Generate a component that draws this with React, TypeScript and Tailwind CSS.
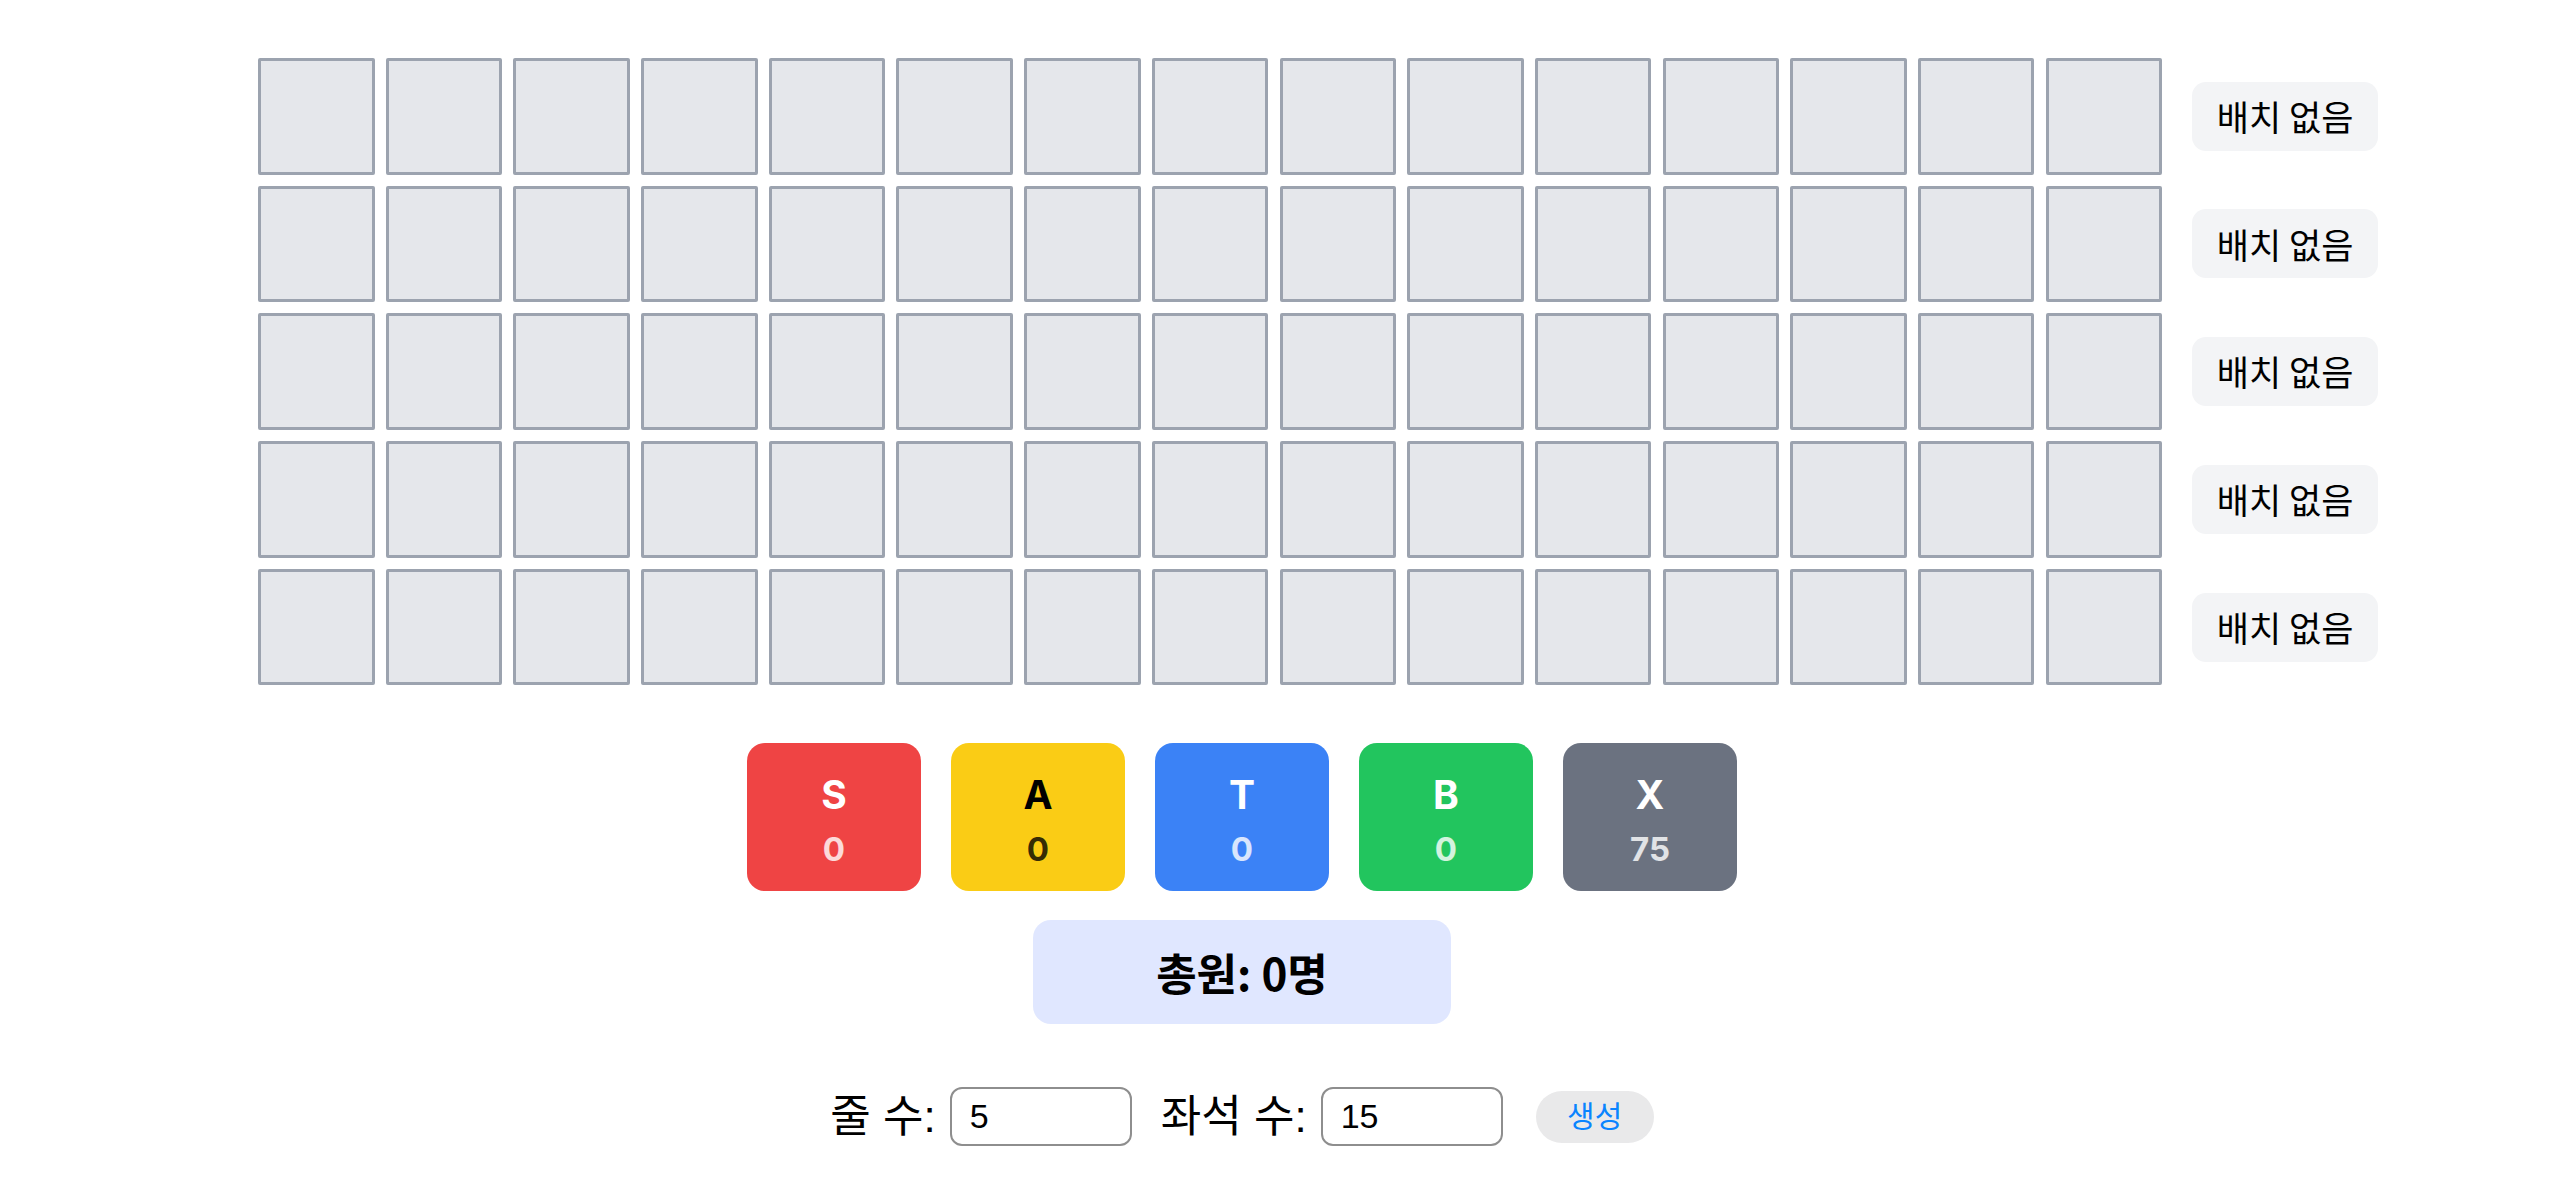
import React from 'react';

type Grade = 'S' | 'A' | 'T' | 'B' | 'X';

interface GradeCard {
    grade: Grade;
    count: number;
    box: string;
    label: string;
    value: string;
}

const ROWS = 5;
const SEATS = 15;

const gradeCards: GradeCard[] = [
    { grade: 'S', count: 0, box: 'bg-[#ef4444]', label: 'text-white', value: 'text-white/80' },
    { grade: 'A', count: 0, box: 'bg-[#facc15]', label: 'text-black', value: 'text-black/80' },
    { grade: 'T', count: 0, box: 'bg-[#3b82f6]', label: 'text-white', value: 'text-white/80' },
    { grade: 'B', count: 0, box: 'bg-[#22c55e]', label: 'text-white', value: 'text-white/80' },
    { grade: 'X', count: 75, box: 'bg-[#6b7280]', label: 'text-white', value: 'text-white/80' },
];

const kr = "font-['Noto_Sans_CJK_KR',sans-serif]";
const ui = "font-['Liberation_Sans','Noto_Sans_CJK_KR',sans-serif]";

function SeatRow() {
    return (
        <div className="flex items-center">
            <div className="flex gap-[11.2px]">
                {Array.from({ length: SEATS }).map((_, i) => (
                    <div
                        key={i}
                        className="w-[116.5px] h-[116.5px] bg-[#e5e7eb] border-[3px] border-[#9ca3af] rounded-[2px]"
                    />
                ))}
            </div>
            <div className={`ml-[30px] w-[186px] h-[69px] rounded-[14px] bg-[#f3f4f6] flex items-center justify-center text-[35px] text-black ${kr}`}>
                배치 없음
            </div>
        </div>
    );
}

export default function App() {
    const total = gradeCards.filter((c) => c.grade !== 'X').reduce((s, c) => s + c.count, 0);

    return (
        <div className="min-h-screen bg-white pt-[58px] pb-10">
            {/* Seat grid */}
            <div className="ml-[258px] flex flex-col gap-[11.2px]">
                {Array.from({ length: ROWS }).map((_, r) => (
                    <SeatRow key={r} />
                ))}
            </div>

            <div className="ml-[258px] w-[1968px] flex flex-col items-center">
                {/* Grade counters */}
                <div className="mt-[58px] flex gap-[30px]">
                    {gradeCards.map((c) => (
                        <div
                            key={c.grade}
                            className={`w-[174px] h-[148px] pt-[6px] rounded-[18px] flex flex-col items-center justify-center font-['Inter',sans-serif] font-bold ${c.box}`}
                        >
                            <span className={`text-[39px] leading-[52px] ${c.label}`}>{c.grade}</span>
                            <span className={`text-[33px] leading-[46px] mt-[5px] ${c.value}`}>{c.count}</span>
                        </div>
                    ))}
                </div>

                {/* Total */}
                <div className={`mt-[29px] w-[418px] h-[104px] rounded-[18px] bg-[#e0e7ff] flex items-center justify-center text-[44px] font-bold text-black ${kr}`}>
                    총원: {total}명
                </div>

                {/* Controls */}
                <div className={`mt-[63px] flex items-center text-black ${ui}`}>
                    <span className="text-[44px] leading-none">줄 수:</span>
                    <input
                        readOnly
                        value="5"
                        className="ml-[14px] w-[182px] h-[59px] border-2 border-[#8e8e8e] rounded-[12px] pl-[18px] text-[34px] text-black bg-white outline-none"
                    />
                    <span className="ml-[29px] text-[44px] leading-none">좌석 수:</span>
                    <input
                        readOnly
                        value="15"
                        className="ml-[14px] w-[182px] h-[59px] border-2 border-[#8e8e8e] rounded-[12px] pl-[18px] text-[34px] text-black bg-white outline-none"
                    />
                    <button className="ml-[33px] w-[118px] h-[52px] rounded-full bg-[#e9e9ea] text-[#0a84ff] text-[30px]">
                        생성
                    </button>
                </div>
            </div>
        </div>
    );
}
